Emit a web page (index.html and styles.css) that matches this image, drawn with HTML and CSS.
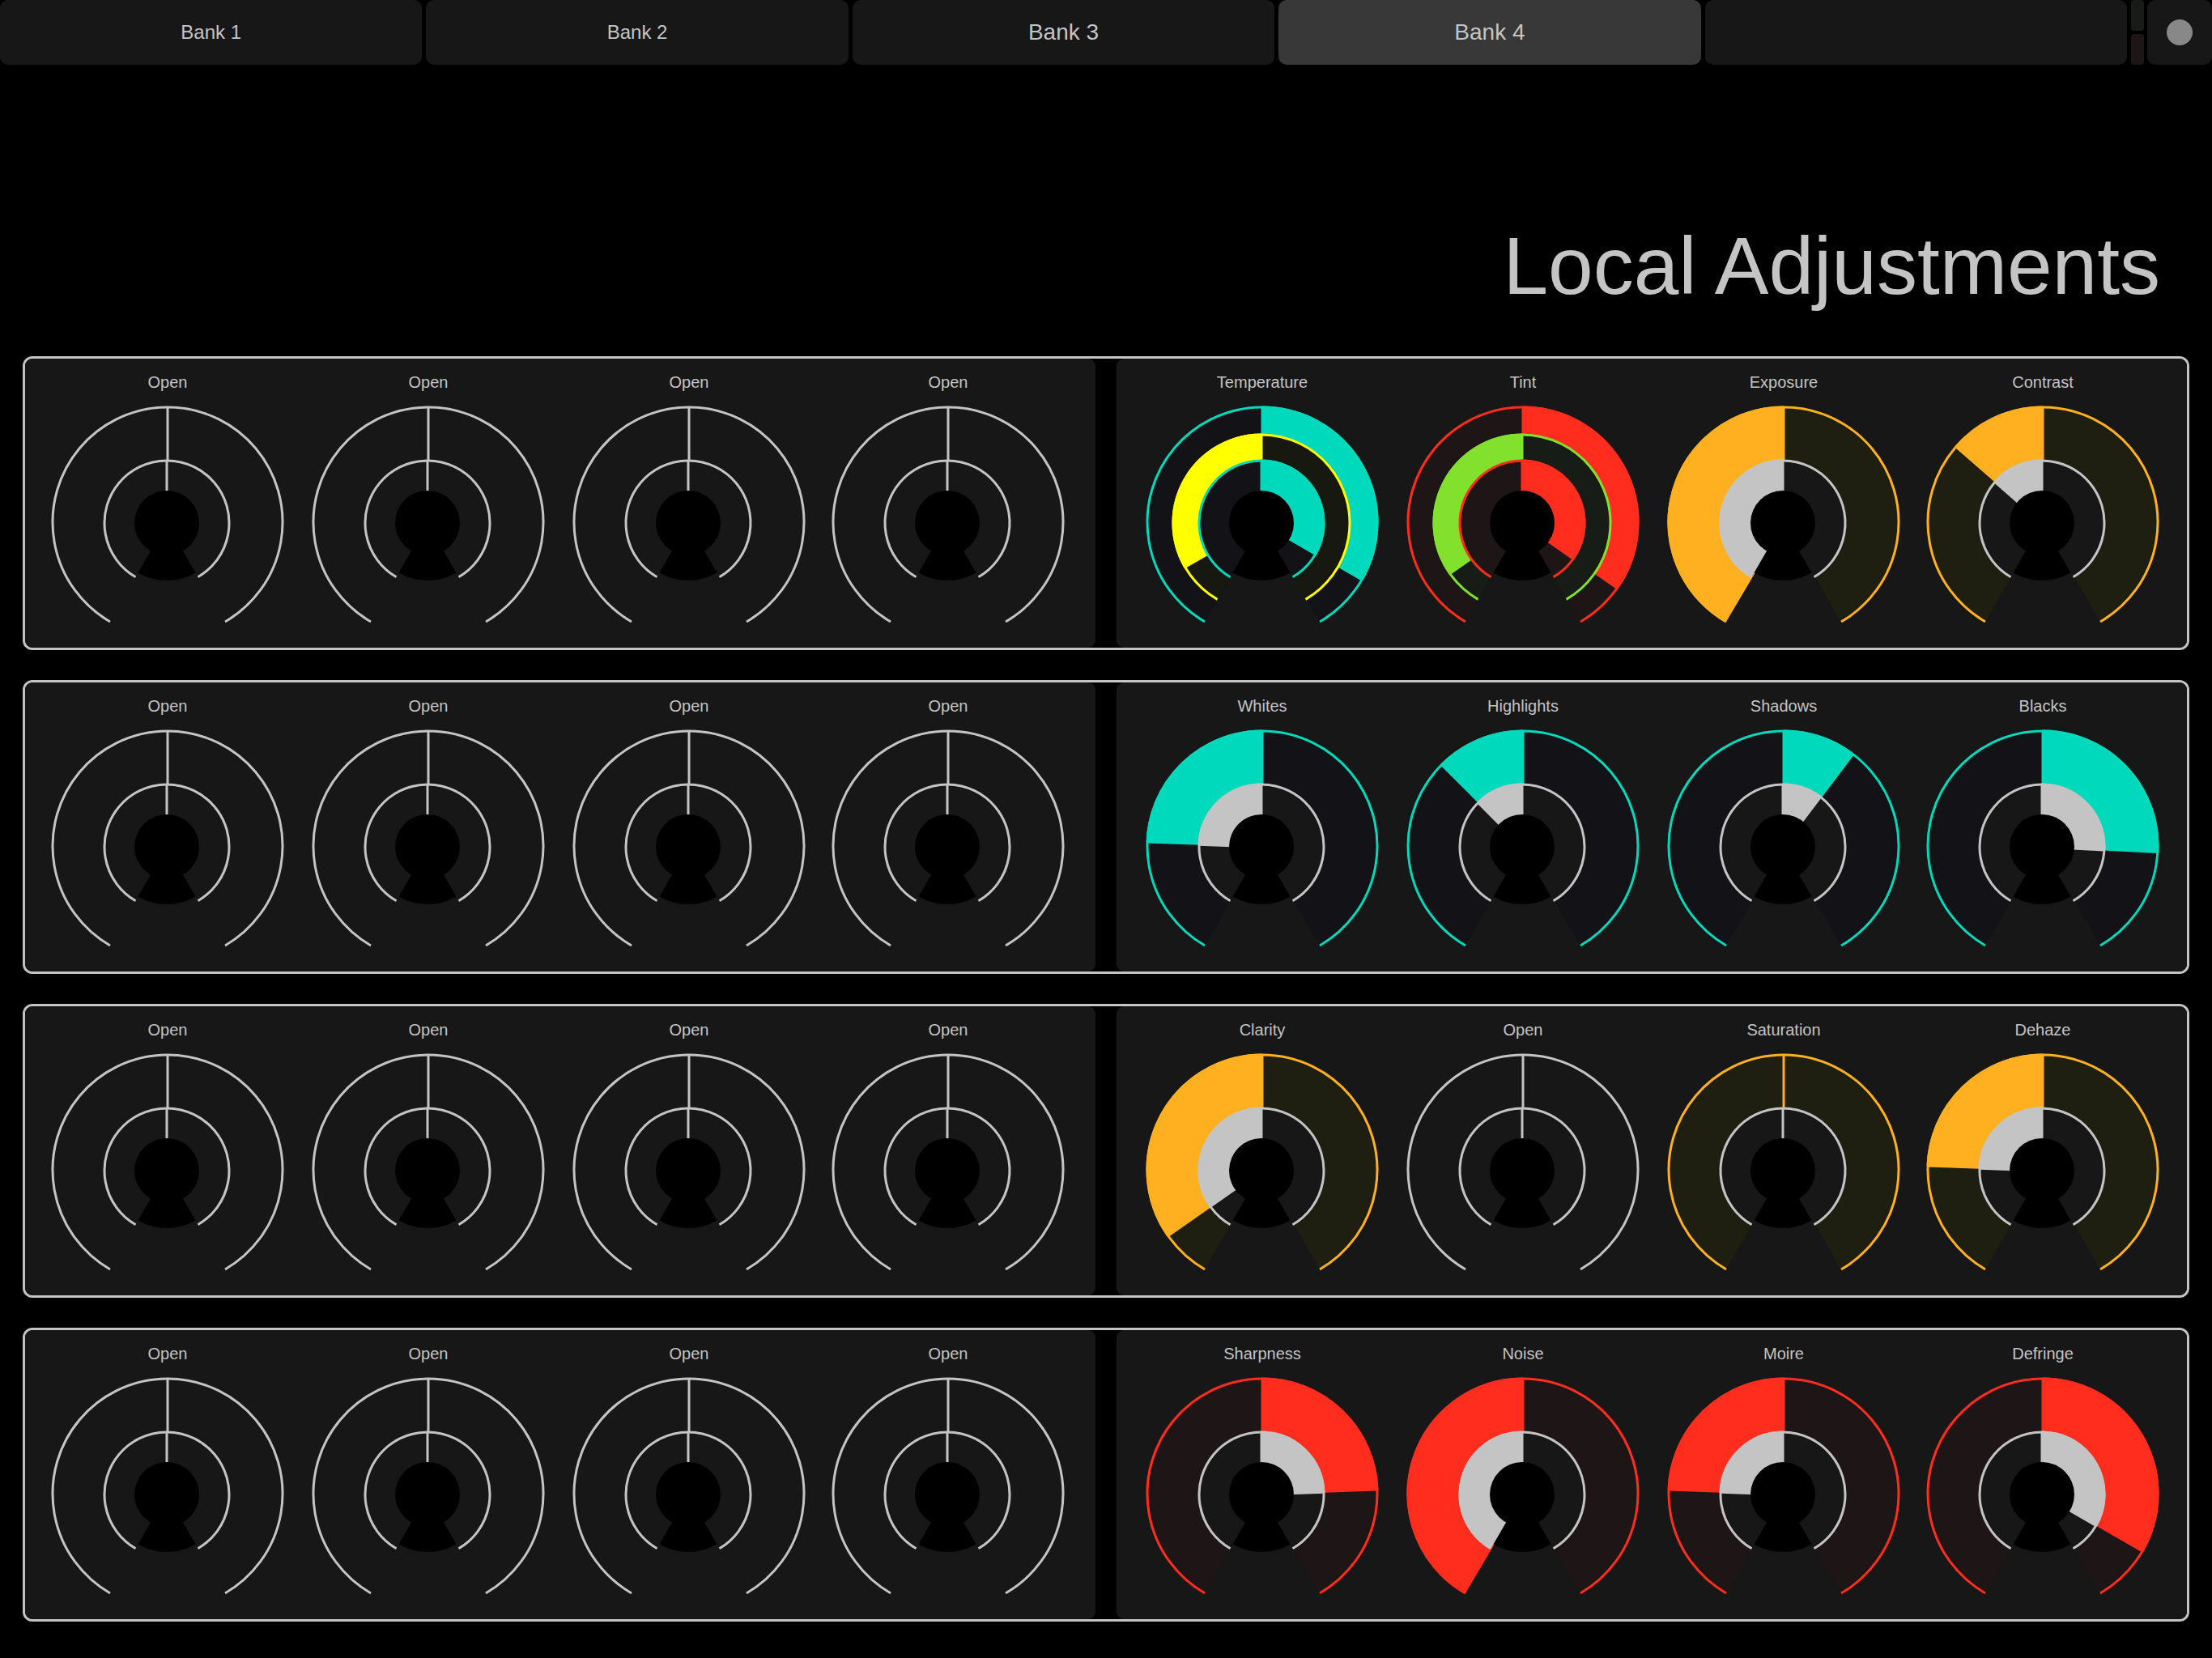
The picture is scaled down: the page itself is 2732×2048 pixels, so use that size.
FILE: index.html
```html
<!DOCTYPE html>
<html lang="en">
<head>
  <meta charset="utf-8">
  <meta name="viewport" content="width=device-width, initial-scale=1">
  <title>Local Adjustments</title>
  <link rel="stylesheet" href="styles.css">
</head>
<body>
  <header class="toolbar">
    <nav class="banks" aria-label="Banks">
      <button class="tile bank" type="button">Bank 1</button>
      <button class="tile bank" type="button">Bank 2</button>
      <button class="tile bank bank-large" type="button">Bank 3</button>
      <button class="tile bank bank-large bank-active" type="button" aria-pressed="true">Bank 4</button>
      <button class="tile bank" type="button" aria-label="Empty bank"></button>
    </nav>
    <div class="lamps">
      <span class="lamp lamp-in"></span>
      <span class="lamp lamp-out"></span>
    </div>
    <button class="tile menu" type="button" aria-label="Menu"><span class="dot"></span></button>
  </header>

  <main class="board">
    <h1 class="title">Local Adjustments</h1>

    <section class="strip">
      <div class="panel panel-left">
        <div class="knob"><label for="a1">Open</label><input id="a1" type="range" min="-150" max="150" value="0"></div>
        <div class="knob"><label for="a2">Open</label><input id="a2" type="range" min="-150" max="150" value="0"></div>
        <div class="knob"><label for="a3">Open</label><input id="a3" type="range" min="-150" max="150" value="0"></div>
        <div class="knob"><label for="a4">Open</label><input id="a4" type="range" min="-150" max="150" value="0"></div>
      </div>
      <div class="panel panel-right">
        <div class="knob" data-outer="teal" data-middle="yellow" data-inner="teal"><label for="a5">Temperature</label><input id="a5" type="range" min="-150" max="150" value="120"></div>
        <div class="knob" data-outer="red" data-middle="green" data-inner="red"><label for="a6">Tint</label><input id="a6" type="range" min="-150" max="150" value="125"></div>
        <div class="knob" data-outer="orange"><label for="a7">Exposure</label><input id="a7" type="range" min="-150" max="150" value="-150"></div>
        <div class="knob" data-outer="orange"><label for="a8">Contrast</label><input id="a8" type="range" min="-150" max="150" value="-49"></div>
      </div>
    </section>

    <section class="strip">
      <div class="panel panel-left">
        <div class="knob"><label for="b1">Open</label><input id="b1" type="range" min="-150" max="150" value="0"></div>
        <div class="knob"><label for="b2">Open</label><input id="b2" type="range" min="-150" max="150" value="0"></div>
        <div class="knob"><label for="b3">Open</label><input id="b3" type="range" min="-150" max="150" value="0"></div>
        <div class="knob"><label for="b4">Open</label><input id="b4" type="range" min="-150" max="150" value="0"></div>
      </div>
      <div class="panel panel-right">
        <div class="knob" data-outer="teal"><label for="b5">Whites</label><input id="b5" type="range" min="-150" max="150" value="-88"></div>
        <div class="knob" data-outer="teal"><label for="b6">Highlights</label><input id="b6" type="range" min="-150" max="150" value="-45"></div>
        <div class="knob" data-outer="teal"><label for="b7">Shadows</label><input id="b7" type="range" min="-150" max="150" value="37"></div>
        <div class="knob" data-outer="teal"><label for="b8">Blacks</label><input id="b8" type="range" min="-150" max="150" value="93"></div>
      </div>
    </section>

    <section class="strip">
      <div class="panel panel-left">
        <div class="knob"><label for="c1">Open</label><input id="c1" type="range" min="-150" max="150" value="0"></div>
        <div class="knob"><label for="c2">Open</label><input id="c2" type="range" min="-150" max="150" value="0"></div>
        <div class="knob"><label for="c3">Open</label><input id="c3" type="range" min="-150" max="150" value="0"></div>
        <div class="knob"><label for="c4">Open</label><input id="c4" type="range" min="-150" max="150" value="0"></div>
      </div>
      <div class="panel panel-right">
        <div class="knob" data-outer="orange"><label for="c5">Clarity</label><input id="c5" type="range" min="-150" max="150" value="-125"></div>
        <div class="knob"><label for="c6">Open</label><input id="c6" type="range" min="-150" max="150" value="0"></div>
        <div class="knob" data-outer="orange"><label for="c7">Saturation</label><input id="c7" type="range" min="-150" max="150" value="0"></div>
        <div class="knob" data-outer="orange"><label for="c8">Dehaze</label><input id="c8" type="range" min="-150" max="150" value="-88"></div>
      </div>
    </section>

    <section class="strip">
      <div class="panel panel-left">
        <div class="knob"><label for="d1">Open</label><input id="d1" type="range" min="-150" max="150" value="0"></div>
        <div class="knob"><label for="d2">Open</label><input id="d2" type="range" min="-150" max="150" value="0"></div>
        <div class="knob"><label for="d3">Open</label><input id="d3" type="range" min="-150" max="150" value="0"></div>
        <div class="knob"><label for="d4">Open</label><input id="d4" type="range" min="-150" max="150" value="0"></div>
      </div>
      <div class="panel panel-right">
        <div class="knob" data-outer="red"><label for="d5">Sharpness</label><input id="d5" type="range" min="-150" max="150" value="88"></div>
        <div class="knob" data-outer="red"><label for="d6">Noise</label><input id="d6" type="range" min="-150" max="150" value="-150"></div>
        <div class="knob" data-outer="red"><label for="d7">Moire</label><input id="d7" type="range" min="-150" max="150" value="-88"></div>
        <div class="knob" data-outer="red"><label for="d8">Defringe</label><input id="d8" type="range" min="-150" max="150" value="120"></div>
      </div>
    </section>
  </main>
  <script src="knobs.js"></script>
</body>
</html>
```

FILE: styles.css
```css
* {
  box-sizing: border-box;
}

body {
  margin: 0;
  background: #000;
  color: #c4c4c4;
  font-family: "Liberation Sans", Arial, Helvetica, sans-serif;
}

/* Top bar */

.toolbar {
  display: flex;
  gap: 4px;
  height: 80px;
}

.banks {
  display: flex;
  flex: 1;
  gap: 5px;
  margin-right: 1px;
}

.tile {
  border: 0;
  border-radius: 10px;
  padding: 0;
  background: #171717;
  color: inherit;
  font-family: inherit;
}

.bank {
  flex: 1;
  font-size: 24px;
}

.bank-large {
  font-size: 28px;
}

.bank-active {
  background: #383838;
}

.lamps {
  display: flex;
  flex-direction: column;
  gap: 4px;
  width: 16px;
}

.lamp {
  flex: 1;
  border-radius: 4px;
}

.lamp-in {
  background: #171c16;
}

.lamp-out {
  background: #1e1616;
}

.menu {
  display: flex;
  align-items: center;
  justify-content: center;
  width: 80px;
}

.dot {
  width: 32px;
  height: 32px;
  border-radius: 50%;
  background: #888;
}

/* Board */

.board {
  padding: 188px 28px 45px;
}

.title {
  margin: 0 36px 52px;
  font-size: 100px;
  font-weight: 400;
  line-height: 120px;
  text-align: right;
}

.strip {
  display: grid;
  grid-template-columns: 1fr 1fr;
  gap: 26px;
  border: 3px solid #c4c4c4;
  border-radius: 12px;
}

.strip + .strip {
  margin-top: 37px;
}

.panel {
  display: grid;
  grid-template-columns: repeat(3, 161fr) 159fr;
  border-radius: 9px;
  background: #171717;
}

.panel-left {
  padding: 17px 23px 11px 15px;
}

.panel-right {
  padding: 17px 19px 11px;
}

/* Knobs */

.knob {
  display: flex;
  flex-direction: column;
  align-items: center;
  gap: 17px;
  position: relative;
  font-size: 20px;
  line-height: 24px;
}

.knob input {
  position: absolute;
  inset: 0;
  width: 100%;
  height: 100%;
  margin: 0;
  opacity: 0;
}

.dial {
  width: 100%;
  max-width: 288px;
  color: #c4c4c4;
}

.track {
  fill: #171717;
}

.value {
  fill: currentColor;
  stroke: currentColor;
  stroke-width: 3;
  stroke-linejoin: bevel;
}

.rim {
  fill: none;
  stroke: currentColor;
  stroke-width: 3;
}

.teal { color: #00d9bb; }
.teal .track { fill: #121217; }
.yellow { color: #ffff00; }
.yellow .track { fill: #171911; }
.red { color: #ff2d1e; }
.red .track { fill: #1e1616; }
.green { color: #82e12d; }
.green .track { fill: #171c16; }
.orange { color: #ffb020; }
.orange .track { fill: #1f1f11; }
```

FILE: knobs.js
```js
// Draws every knob as concentric dials. Angles are degrees clockwise from the top.
const LIMIT = 150;

function point(cx, cy, r, angle) {
  const a = angle * Math.PI / 180;
  return (cx + r * Math.sin(a)).toFixed(2) + ' ' + (cy - r * Math.cos(a)).toFixed(2);
}

function arc(cx, cy, r, from, to) {
  const large = to - from > 180 ? 1 : 0;
  return point(cx, cy, r, from) + ' A' + r + ' ' + r + ' 0 ' + large + ' 1 ' + point(cx, cy, r, to);
}

function sector(cx, cy, r, from, to) {
  return 'M' + cx + ' ' + cy + ' L' + arc(cx, cy, r, from, to) + ' Z';
}

function dial(cx, cy, r, value, color) {
  // Keeps half of the 3px outline from running past the end of the track.
  const end = LIMIT - 1.5 / r * 180 / Math.PI;
  const shown = Math.max(-end, Math.min(end, value));
  return '<g class="' + color + '">' +
    '<path class="track" d="' + sector(cx, cy, r, -LIMIT, LIMIT) + '"/>' +
    '<path class="value" d="' + sector(cx, cy, r, Math.min(0, shown), Math.max(0, shown)) + '"/>' +
    '<path class="rim" d="M' + arc(cx, cy, r, -LIMIT, LIMIT) + '"/></g>';
}

function draw(knob, svg) {
  const value = Number(knob.querySelector('input').value);
  const { outer = 'open', middle, inner = 'open' } = knob.dataset;
  svg.innerHTML =
    dial(144, 144, 142, value, outer) +
    (middle ? dial(143, 145, 109, -value, middle) : '') +
    dial(143, 145, 77, value, inner) +
    '<circle cx="143" cy="145" r="40"/>' +
    '<path d="' + sector(143, 145, 71, LIMIT, 360 - LIMIT) + '"/>';
}

document.querySelectorAll('.knob').forEach(function (knob) {
  const svg = document.createElementNS('http://www.w3.org/2000/svg', 'svg');
  svg.setAttribute('class', 'dial');
  svg.setAttribute('viewBox', '0 0 288 288');
  svg.setAttribute('aria-hidden', 'true');
  knob.insertBefore(svg, knob.querySelector('input'));
  draw(knob, svg);
  knob.querySelector('input').addEventListener('input', function () {
    draw(knob, svg);
  });
});
```
